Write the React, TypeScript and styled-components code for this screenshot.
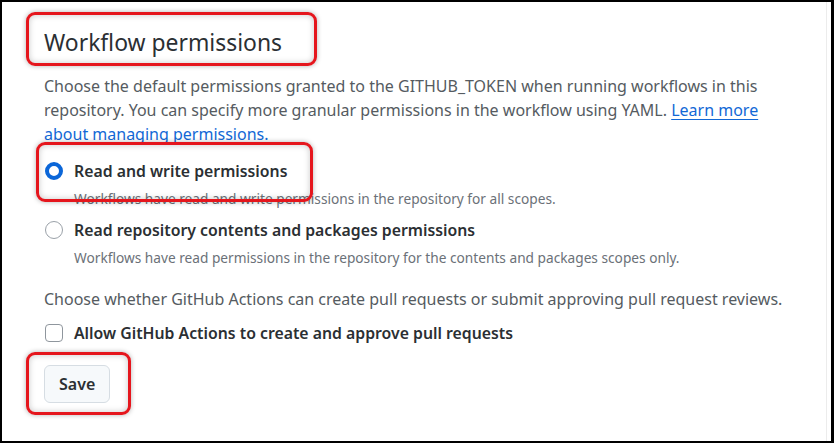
import styled, { createGlobalStyle } from "styled-components";

const GlobalStyle = createGlobalStyle`
  html, body {
    margin: 0;
    padding: 0;
    background: #000;
  }
  body {
    font-family: "Noto Sans", "Open Sans", Arial, sans-serif;
  }
`;

const Frame = styled.div`
  box-sizing: border-box;
  width: 834px;
  height: 443px;
  border-style: solid;
  border-color: #000;
  border-width: 2px 3px 2px 2px;
  background: #fff;
  overflow: hidden;
`;

const Panel = styled.section`
  box-sizing: border-box;
  height: 100%;
  padding: 27px 0 0 42px;
  border-right: 1px solid #ececec;
  margin-right: 4px;
  display: flex;
  flex-direction: column;
  align-items: flex-start;
`;

const Marked = styled.div<{ $mt?: number }>`
  position: relative;
  margin-top: ${(p) => p.$mt ?? 0}px;
`;

const Annotation = styled.span<{ $t: number; $l: number; $r: number; $b: number }>`
  position: absolute;
  top: ${(p) => p.$t}px;
  left: ${(p) => p.$l}px;
  right: ${(p) => p.$r}px;
  bottom: ${(p) => p.$b}px;
  border: 3px solid #e5161d;
  border-radius: 9px;
  box-shadow: 0 0 5px rgba(0, 0, 0, 0.3), inset 0 0 6px rgba(0, 0, 0, 0.22);
  pointer-events: none;
`;

const Heading = styled.h2`
  margin: 0;
  font-size: 22.9px;
  line-height: 28px;
  font-weight: 400;
  color: #2b2f33;
`;

const Text = styled.p<{ $mt: number }>`
  margin: ${(p) => p.$mt}px 0 0;
  font-size: 16px;
  line-height: 24px;
  color: #555b61;
`;

const Link = styled.a`
  color: #1268d6;
  text-decoration: underline;
  text-underline-offset: 3px;
`;

const Options = styled.div<{ $mt: number }>`
  margin-top: ${(p) => p.$mt}px;
  display: flex;
  flex-direction: column;
  align-items: flex-start;
  gap: 9px;
`;

const Option = styled.div`
  display: flex;
  flex-direction: column;
  align-items: flex-start;
`;

const OptionHead = styled.label`
  position: relative;
  display: flex;
  align-items: center;
  gap: 11px;
  height: 24px;
  cursor: pointer;
`;

const Radio = styled.span<{ $on?: boolean }>`
  box-sizing: border-box;
  flex: none;
  width: 18px;
  height: 18px;
  margin-left: 1px;
  border-radius: 50%;
  border: ${(p) => (p.$on ? "4.5px solid #0b66d8" : "1px solid #9aa1a8")};
  background: #fff;
`;

const Checkbox = styled.span`
  box-sizing: border-box;
  flex: none;
  width: 18px;
  height: 18px;
  margin-left: 1px;
  border: 1px solid #8f969d;
  border-radius: 4px;
  background: #fff;
`;

const Label = styled.span`
  font-size: 15.8px;
  line-height: 24px;
  font-weight: 600;
  color: #2b2f33;
  white-space: nowrap;
`;

const Hint = styled.span`
  margin: 6px 0 0 30px;
  font-size: 13.7px;
  line-height: 20px;
  color: #6b7178;
  white-space: nowrap;
`;

const Button = styled.button`
  display: block;
  height: 38px;
  padding: 0 14px;
  border: 1px solid #d6dde3;
  border-radius: 6px;
  background: #f6f9fb;
  font-family: inherit;
  font-size: 16px;
  font-weight: 600;
  color: #2b2f33;
`;

export default function App() {
  return (
    <>
      <GlobalStyle />
      <Frame>
        <Panel>
          <Marked>
            <Heading>Workflow permissions</Heading>
            <Annotation $t={-17} $l={-18} $r={-35} $b={-9} />
          </Marked>
          <Text $mt={17}>
            Choose the default permissions granted to the GITHUB_TOKEN when running workflows in this
            <br />
            repository. You can specify more granular permissions in the workflow using YAML.{" "}
            <Link>Learn more</Link>
            <br />
            <Link>about managing permissions.</Link>
          </Text>
          <Options $mt={13}>
            <Option>
              <OptionHead>
                <Radio $on />
                <Label>Read and write permissions</Label>
                <Annotation $t={-17} $l={-8} $r={-26} $b={-19} />
              </OptionHead>
              <Hint>Workflows have read and write permissions in the repository for all scopes.</Hint>
            </Option>
            <Option>
              <OptionHead>
                <Radio />
                <Label>Read repository contents and packages permissions</Label>
              </OptionHead>
              <Hint>
                Workflows have read permissions in the repository for the contents and packages scopes only.
              </Hint>
            </Option>
          </Options>
          <Text $mt={19}>
            Choose whether GitHub Actions can create pull requests or submit approving pull request reviews.
          </Text>
          <Options $mt={10}>
            <Option>
              <OptionHead>
                <Checkbox />
                <Label>Allow GitHub Actions to create and approve pull requests</Label>
              </OptionHead>
            </Option>
          </Options>
          <Marked $mt={20}>
            <Button>Save</Button>
            <Annotation $t={-13} $l={-18} $r={-21} $b={-12} />
          </Marked>
        </Panel>
      </Frame>
    </>
  );
}
